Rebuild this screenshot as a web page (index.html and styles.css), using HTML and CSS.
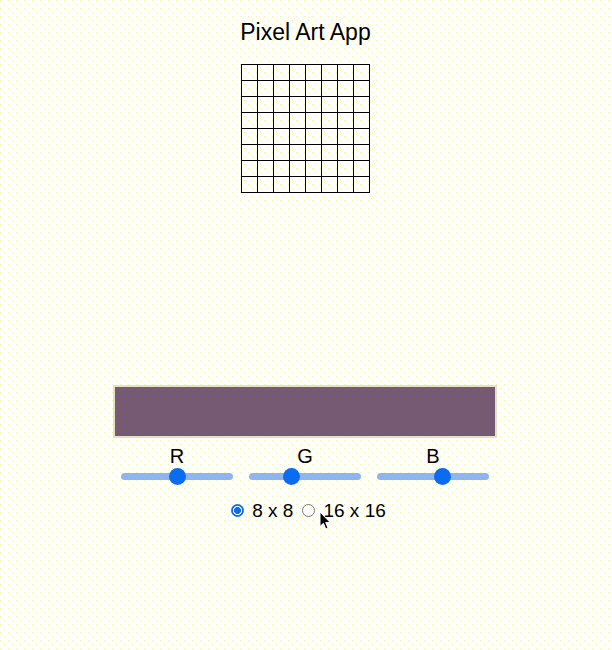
FILE: index.html
```html
<!DOCTYPE html>
<html>
<head>
<meta charset="utf-8">
<title>Pixel Art App</title>
<link rel="stylesheet" href="styles.css">
</head>
<body>
<div class="app">
  <h1 class="title">Pixel Art App</h1>
  <table class="grid">
    <tr><td></td><td></td><td></td><td></td><td></td><td></td><td></td><td></td></tr>
    <tr><td></td><td></td><td></td><td></td><td></td><td></td><td></td><td></td></tr>
    <tr><td></td><td></td><td></td><td></td><td></td><td></td><td></td><td></td></tr>
    <tr><td></td><td></td><td></td><td></td><td></td><td></td><td></td><td></td></tr>
    <tr><td></td><td></td><td></td><td></td><td></td><td></td><td></td><td></td></tr>
    <tr><td></td><td></td><td></td><td></td><td></td><td></td><td></td><td></td></tr>
    <tr><td></td><td></td><td></td><td></td><td></td><td></td><td></td><td></td></tr>
    <tr><td></td><td></td><td></td><td></td><td></td><td></td><td></td><td></td></tr>
  </table>
  <div class="swatch"></div>
  <div class="channels">
    <label class="channel"><span class="channel-name">R</span><input class="slider" type="range" min="0" max="255" value="130"></label>
    <label class="channel"><span class="channel-name">G</span><input class="slider" type="range" min="0" max="255" value="90"></label>
    <label class="channel"><span class="channel-name">B</span><input class="slider" type="range" min="0" max="255" value="154"></label>
  </div>
  <div class="sizes">
    <label class="size"><input class="radio" type="radio" name="size" checked><span>8 x 8</span></label>
    <label class="size"><input class="radio" type="radio" name="size"><span>16 x 16</span></label>
  </div>
</div>
<svg class="cursor" width="13" height="20" viewBox="0 0 13 20">
  <path d="M1 1 L1 15.5 L4.4 12.3 L6.8 18 L9 17 L6.7 11.5 L11.2 11.5 Z" fill="#000" stroke="#fff" stroke-width="1" stroke-linejoin="round"/>
</svg>
</body>
</html>
```
FILE: styles.css
```css
html, body {
  margin: 0;
  padding: 0;
}
body {
  position: relative;
  min-height: 650px;
  font-family: "Liberation Sans", Arial, sans-serif;
  color: #000;
  background-color: #ffffff;
  background-image:
    conic-gradient(at 1px 1px, transparent 75%, #f7ef9c 0),
    conic-gradient(at 1px 1px, transparent 75%, #f7ef9c 0);
  background-size: 8px 8px, 8px 8px;
  background-position: 0 0, 4px 4px;
}
.app {
  display: flex;
  flex-direction: column;
  align-items: center;
  padding-top: 19px;
  padding-right: 1px;
}
.title {
  margin: 0;
  font-size: 23px;
  line-height: 26px;
  font-weight: normal;
}
.grid {
  margin-top: 19px;
  border-collapse: collapse;
  border-spacing: 0;
}
.grid td {
  width: 16px;
  height: 16px;
  padding: 0;
  border: 1px solid #000;
  box-sizing: border-box;
}
.swatch {
  margin-top: 192px;
  margin-right: 1px;
  width: 384px;
  height: 53px;
  box-sizing: border-box;
  border: 2px solid #e6e1c4;
  background: #765a74;
}
.channels {
  display: flex;
  margin-top: 7px;
  margin-right: 1px;
}
.channel {
  width: 128px;
  display: flex;
  flex-direction: column;
  align-items: center;
}
.channel-name {
  font-size: 20px;
  line-height: 23px;
}
.slider {
  -webkit-appearance: none;
  appearance: none;
  width: 112px;
  height: 16px;
  margin: 0;
  background: transparent;
}
.slider::-webkit-slider-runnable-track {
  height: 7px;
  border-radius: 4px;
  background: #8db6f0;
}
.slider::-webkit-slider-thumb {
  -webkit-appearance: none;
  appearance: none;
  width: 17px;
  height: 17px;
  margin-top: -5px;
  border-radius: 50%;
  background: #0b6cf0;
  border: none;
}
.sizes {
  display: flex;
  align-items: center;
  margin-top: 15px;
  padding-left: 6px;
  gap: 9px;
  font-size: 19px;
  line-height: 23px;
}
.size {
  display: flex;
  align-items: center;
  gap: 8px;
}
.radio {
  -webkit-appearance: none;
  appearance: none;
  width: 13px;
  height: 13px;
  margin: 0;
  border-radius: 50%;
  border: 1px solid #777;
  background: #fff;
  box-sizing: border-box;
}
.radio:checked {
  border: 1px solid #0b6cf0;
  background: radial-gradient(circle, #0b6cf0 0 3.2px, #fff 3.8px 4.3px, #0b6cf0 4.8px);
}
.cursor {
  position: absolute;
  left: 319px;
  top: 511px;
}
```
